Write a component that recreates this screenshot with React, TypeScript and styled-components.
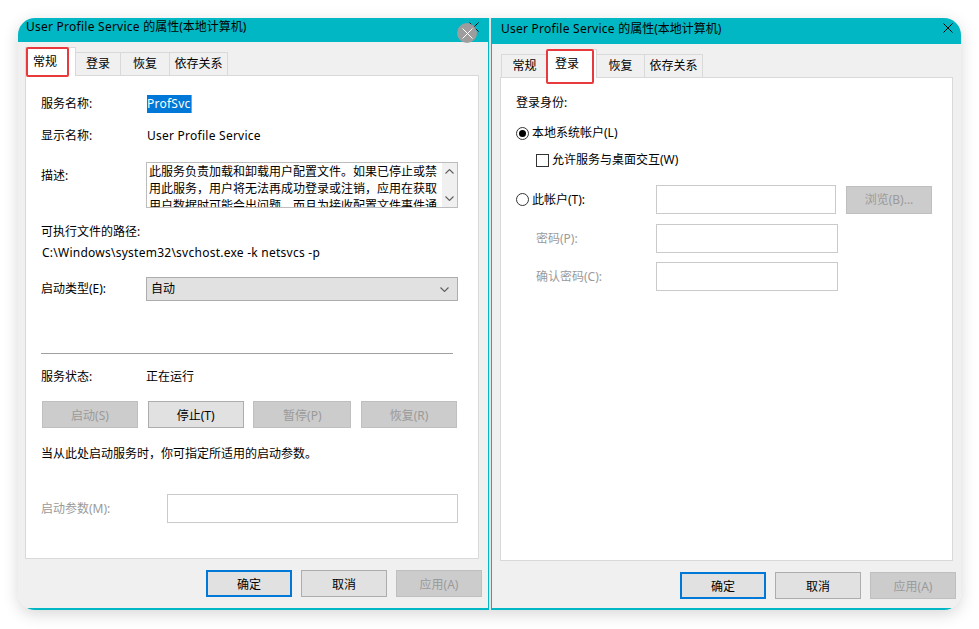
import React from "react";
import styled, { createGlobalStyle, css } from "styled-components";

const TEAL = "#00b7c3";

const GlobalStyle = createGlobalStyle`
  html, body { margin: 0; padding: 0; background: #fff; }
  body {
    font-family: "Noto Sans", "Noto Sans CJK SC", sans-serif;
    font-size: 12px;
    color: #000;
  }
  * { box-sizing: border-box; }
`;

const Page = styled.div`
  width: 979px;
  height: 629px;
  padding: 18px 0 0 18px;
`;

const Card = styled.div`
  width: 943px;
  height: 592px;
  display: flex;
  border-radius: 17px;
  overflow: hidden;
  background: #fff;
  box-shadow: 0 4px 16px rgba(0, 0, 0, 0.16);
`;

const Dialog = styled.div<{ $w: number; $side: "left" | "right" }>`
  width: ${(p) => p.$w}px;
  flex: none;
  display: flex;
  flex-direction: column;
  background: #f0f0f0;
  border-bottom: 2px solid ${TEAL};
  ${(p) =>
    p.$side === "left"
      ? css`border-right: 1px solid ${TEAL};`
      : css`border-left: 1px solid ${TEAL};`}
`;

const Strip = styled.div`
  width: 2px;
  flex: none;
  background: #e4e4e4;
`;

// Latin runs in the Windows UI font are a touch wider than Noto Sans
const Latin = styled.span`
  letter-spacing: 0.25px;
`;

const TitleBar = styled.div<{ $h: number; $pl: number; $pt: number }>`
  position: relative;
  height: ${(p) => p.$h}px;
  flex: none;
  background: ${TEAL};
  padding: ${(p) => p.$pt}px 0 0 ${(p) => p.$pl}px;
  line-height: 18px;
  white-space: nowrap;
`;

const CloseX = styled.svg<{ $right: number; $top: number }>`
  position: absolute;
  right: ${(p) => p.$right}px;
  top: ${(p) => p.$top}px;
`;

const CloseBubble = styled.div`
  position: absolute;
  right: 11px;
  top: 5px;
  width: 20px;
  height: 20px;
  border-radius: 50%;
  background: #9d9d9d;
  display: flex;
  align-items: center;
  justify-content: center;
`;

const Body = styled.div<{ $pl: number; $pr: number }>`
  padding: 0 ${(p) => p.$pr}px 0 ${(p) => p.$pl}px;
`;

const TabRow = styled.div<{ $pl: number }>`
  height: 33px;
  display: flex;
  align-items: flex-end;
  padding-left: ${(p) => p.$pl}px;
`;

const Tab = styled.div<{ $w: number; $active?: boolean }>`
  position: relative;
  width: ${(p) => p.$w}px;
  height: 23px;
  border: 1px solid #d9d9d9;
  border-bottom: none;
  margin-left: -1px;
  background: #f0f0f0;
  display: flex;
  align-items: center;
  justify-content: center;
  line-height: 18px;
  ${(p) =>
    p.$active &&
    css`
      height: 29px;
      margin-bottom: -1px;
      background: #fff;
      z-index: 1;
      justify-content: flex-start;
      padding-left: 7px;
    `}
  &:first-child { margin-left: 0; }
`;

const Mark = styled.span<{ $x: number; $w: number; $h: number }>`
  position: absolute;
  left: ${(p) => p.$x}px;
  top: -1px;
  width: ${(p) => p.$w}px;
  height: ${(p) => p.$h}px;
  border: 2px solid #e8393c;
  border-radius: 2px;
  pointer-events: none;
`;

const Panel = styled.div<{ $pt: number }>`
  height: 484px;
  background: #fff;
  border: 1px solid #d9d9d9;
  padding: ${(p) => p.$pt}px 0 0 15px;
`;

const Row = styled.div<{ $mt?: number; $h?: number; $pl?: number; $top?: boolean }>`
  display: flex;
  align-items: ${(p) => (p.$top ? "flex-start" : "center")};
  margin-top: ${(p) => p.$mt ?? 0}px;
  height: ${(p) => p.$h ?? 18}px;
  padding-left: ${(p) => p.$pl ?? 0}px;
  line-height: 18px;
  white-space: nowrap;
`;

const Label = styled.div<{ $w?: number; $dim?: boolean; $pt?: number; $pl?: number }>`
  width: ${(p) => (p.$w ? `${p.$w}px` : "auto")};
  flex: none;
  padding-top: ${(p) => p.$pt ?? 0}px;
  padding-left: ${(p) => p.$pl ?? 0}px;
  color: ${(p) => (p.$dim ? "#9a9a9a" : "#000")};
  display: flex;
  align-items: center;
`;

const Selected = styled.span`
  background: #0078d7;
  color: #fff;
  height: 18px;
  line-height: 18px;
  letter-spacing: 0.25px;
  border-right: 1px solid #f08a24;
`;

const TextBox = styled.div`
  width: 312px;
  height: 46px;
  border: 1px solid #bdbdbd;
  display: flex;
  background: #fff;
`;

const TextLines = styled.div`
  flex: 1;
  overflow: hidden;
  padding-left: 2px;
  line-height: 17px;
  div { white-space: nowrap; overflow: hidden; }
`;

const ScrollBar = styled.div`
  width: 15px;
  background: #f0f0f0;
  display: flex;
  flex-direction: column;
  justify-content: space-between;
  align-items: center;
  padding: 6px 0 6px;
`;

const Select = styled.div`
  width: 312px;
  height: 24px;
  border: 1px solid #adadad;
  background: #e1e1e1;
  display: flex;
  align-items: center;
  justify-content: space-between;
  padding: 0 8px 0 4px;
`;

const Separator = styled.div`
  margin-top: 52px;
  width: 412px;
  border-top: 1px solid #a0a0a0;
`;

const ButtonRow = styled.div`
  display: flex;
  justify-content: space-between;
  width: 416px;
  margin-top: 15px;
  padding-left: 1px;
`;

type Kind = "normal" | "primary" | "disabled";

const Button = styled.div<{ $w: number; $h?: number; $kind?: Kind; $ml?: number }>`
  width: ${(p) => p.$w}px;
  height: ${(p) => p.$h ?? 27}px;
  margin-left: ${(p) => p.$ml ?? 0}px;
  flex: none;
  display: flex;
  align-items: center;
  justify-content: center;
  background: #e1e1e1;
  border: 1px solid #adadad;
  color: #000;
  ${(p) =>
    p.$kind === "primary" &&
    css`
      border: 2px solid #0078d7;
    `}
  ${(p) =>
    p.$kind === "disabled" &&
    css`
      background: #cccccc;
      border-color: #bfbfbf;
      color: #9a9a9a;
    `}
`;

const Input = styled.div<{ $w: number; $h?: number }>`
  width: ${(p) => p.$w}px;
  height: ${(p) => p.$h ?? 29}px;
  flex: none;
  border: 1px solid #cacaca;
  background: #fff;
`;

const Radio = styled.span<{ $on?: boolean }>`
  width: 13px;
  height: 13px;
  flex: none;
  border-radius: 50%;
  border: 1px solid #333;
  background: #fff;
  margin-right: 3px;
  display: flex;
  align-items: center;
  justify-content: center;
  &::after {
    content: "";
    width: 7px;
    height: 7px;
    border-radius: 50%;
    background: ${(p) => (p.$on ? "#000" : "transparent")};
  }
`;

const Check = styled.span`
  width: 13px;
  height: 13px;
  flex: none;
  border: 1px solid #333;
  background: #fff;
  margin-right: 3px;
`;

const Footer = styled.div<{ $pr: number }>`
  display: flex;
  justify-content: flex-end;
  gap: 9px;
  padding: 11px ${(p) => p.$pr}px 0 0;
`;

const Chevron = ({ up }: { up?: boolean }) => (
  <svg width="9" height="5" viewBox="0 0 9 5">
    <polyline
      points={up ? "0.5,4.5 4.5,0.5 8.5,4.5" : "0.5,0.5 4.5,4.5 8.5,0.5"}
      fill="none"
      stroke="#606060"
      strokeWidth="1.1"
    />
  </svg>
);

const XGlyph = ({ color, size }: { color: string; size: number }) => (
  <svg width={size} height={size} viewBox={`0 0 ${size} ${size}`}>
    <path
      d={`M0.5 0.5 L${size - 0.5} ${size - 0.5} M${size - 0.5} 0.5 L0.5 ${size - 0.5}`}
      stroke={color}
      strokeWidth="1"
    />
  </svg>
);

const Title = () => (
  <>
    <Latin>User Profile Service </Latin>的属性(本地计算机)
  </>
);

const GeneralPage = () => (
  <Panel $pt={19}>
    <Row>
      <Label $w={106}>服务名称:</Label>
      <Selected>ProfSvc</Selected>
    </Row>
    <Row $mt={14}>
      <Label $w={106}>显示名称:</Label>
      <Latin>User Profile Service</Latin>
    </Row>
    <Row $mt={17} $h={46} $top>
      <Label $w={105} $pt={5}>描述:</Label>
      <TextBox>
        <TextLines>
          <div>此服务负责加载和卸载用户配置文件。如果已停止或禁</div>
          <div>用此服务，用户将无法再成功登录或注销，应用在获取</div>
          <div>用户数据时可能会出问题，而且为接收配置文件事件通</div>
        </TextLines>
        <ScrollBar>
          <Chevron up />
          <Chevron />
        </ScrollBar>
      </TextBox>
    </Row>
    <Row $mt={15}>可执行文件的路径:</Row>
    <Row $mt={3} $pl={1}>
      <Latin>C:\Windows\system32\svchost.exe -k netsvcs -p</Latin>
    </Row>
    <Row $mt={15} $h={24}>
      <Label $w={105}>启动类型(E):</Label>
      <Select>
        <span>自动</span>
        <Chevron />
      </Select>
    </Row>
    <Separator />
    <Row $mt={14}>
      <Label $w={105}>服务状态:</Label>
      <span>正在运行</span>
    </Row>
    <ButtonRow>
      <Button $w={96} $kind="disabled">启动(S)</Button>
      <Button $w={96}>停止(T)</Button>
      <Button $w={98} $kind="disabled">暂停(P)</Button>
      <Button $w={96} $kind="disabled">恢复(R)</Button>
    </ButtonRow>
    <Row $mt={17}>当从此处启动服务时，你可指定所适用的启动参数。</Row>
    <Row $mt={31} $h={29}>
      <Label $w={126} $dim>启动参数(M):</Label>
      <Input $w={291} />
    </Row>
  </Panel>
);

const LogonPage = () => (
  <Panel $pt={16}>
    <Row>登录身份:</Row>
    <Row $mt={12}>
      <Radio $on />
      本地系统帐户(L)
    </Row>
    <Row $mt={9} $pl={20}>
      <Check />
      允许服务与桌面交互(W)
    </Row>
    <Row $mt={16} $h={29}>
      <Label $w={140}>
        <Radio />
        此帐户(T):
      </Label>
      <Input $w={180} />
      <Button $w={86} $h={28} $kind="disabled" $ml={10}>
        浏览(B)...
      </Button>
    </Row>
    <Row $mt={10} $h={29}>
      <Label $w={140} $pl={20} $dim>密码(P):</Label>
      <Input $w={182} />
    </Row>
    <Row $mt={9} $h={29}>
      <Label $w={140} $pl={20} $dim>确认密码(C):</Label>
      <Input $w={182} />
    </Row>
  </Panel>
);

const FooterButtons = ({ pr }: { pr: number }) => (
  <Footer $pr={pr}>
    <Button $w={86} $kind="primary">确定</Button>
    <Button $w={86}>取消</Button>
    <Button $w={86} $kind="disabled">应用(A)</Button>
  </Footer>
);

export default function App() {
  return (
    <Page>
      <GlobalStyle />
      <Card>
        <Dialog $w={471} $side="left">
          <TitleBar $h={24} $pl={8} $pt={0}>
            <Title />
            <CloseX $right={9} $top={4} width="10" height="10" viewBox="0 0 10 10">
              <path d="M0.5 0.5 L9.5 9.5 M9.5 0.5 L0.5 9.5" stroke="#000" strokeWidth="1" />
            </CloseX>
            <CloseBubble>
              <XGlyph color="#fff" size={11} />
            </CloseBubble>
          </TitleBar>
          <Body $pl={7} $pr={9}>
            <TabRow $pl={0}>
              <Tab $w={51} $active>
                常规
                <Mark $x={0} $w={43} $h={30} />
              </Tab>
              <Tab $w={46}>登录</Tab>
              <Tab $w={50}>恢复</Tab>
              <Tab $w={59}>依存关系</Tab>
            </TabRow>
            <GeneralPage />
          </Body>
          <FooterButtons pr={6} />
        </Dialog>
        <Strip />
        <Dialog $w={470} $side="right">
          <TitleBar $h={26} $pl={9} $pt={2}>
            <Title />
            <CloseX $right={8} $top={5} width="10" height="10" viewBox="0 0 10 10">
              <path d="M0.5 0.5 L9.5 9.5 M9.5 0.5 L0.5 9.5" stroke="#000" strokeWidth="1" />
            </CloseX>
          </TitleBar>
          <Body $pl={8} $pr={8}>
            <TabRow $pl={1}>
              <Tab $w={47}>常规</Tab>
              <Tab $w={50} $active>
                登录
                <Mark $x={-2} $w={48} $h={35} />
              </Tab>
              <Tab $w={49}>恢复</Tab>
              <Tab $w={59}>依存关系</Tab>
            </TabRow>
            <LogonPage />
          </Body>
          <FooterButtons pr={5} />
        </Dialog>
      </Card>
    </Page>
  );
}
